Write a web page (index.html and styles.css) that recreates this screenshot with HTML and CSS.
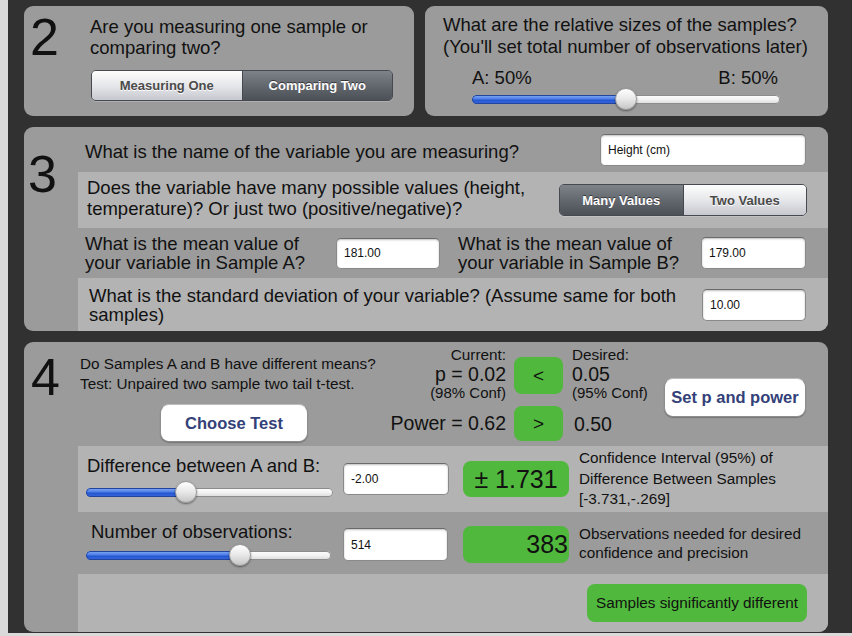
FILE: index.html
```html
<!DOCTYPE html>
<html>
<head>
<meta charset="utf-8">
<title>Sample Size</title>
<link rel="stylesheet" href="styles.css">
</head>
<body>
<div class="screen">
  <div class="top">
    <section class="panel p2">
      <div class="num n2">2</div>
      <div class="p2-body">
        <div class="label">Are you measuring one sample or<br>comparing two?</div>
        <div class="seg seg-a">
          <div class="seg-item light">Measuring One</div>
          <div class="seg-item dark">Comparing Two</div>
        </div>
      </div>
    </section>
    <section class="panel psize">
      <div class="label lsize">What are the relative sizes of the samples?<br>(You'll set total number of observations later)</div>
      <div class="ab"><span>A: 50%</span><span>B: 50%</span></div>
      <div class="slider s-size">
        <div class="track"><div class="fill" style="width:50%"></div></div>
        <div class="thumb" style="left:50%"></div>
      </div>
    </section>
  </div>

  <section class="panel p3">
    <div class="num n3">3</div>
    <div class="rows">
      <div class="row r1">
        <div class="label grow">What is the name of the variable you are measuring?</div>
        <div class="field f-name">Height (cm)</div>
      </div>
      <div class="row r2 lt">
        <div class="label grow">Does the variable have many possible values (height,<br>temperature)? Or just two (positive/negative)?</div>
        <div class="seg seg-b">
          <div class="seg-item dark">Many Values</div>
          <div class="seg-item light">Two Values</div>
        </div>
      </div>
      <div class="row r3">
        <div class="label tight">What is the mean value of<br>your variable in Sample A?</div>
        <div class="field f-a">181.00</div>
        <div class="label tight lb">What is the mean value of<br>your variable in Sample B?</div>
        <div class="field f-b">179.00</div>
      </div>
      <div class="row r4 lt">
        <div class="label tight grow">What is the standard deviation of your variable? (Assume same for both<br>samples)</div>
        <div class="field f-sd">10.00</div>
      </div>
    </div>
  </section>

  <section class="panel p4">
    <div class="num n4">4</div>
    <div class="rows">
      <div class="p4-top">
        <div class="p4-left">
          <div class="small intro">Do Samples A and B have different means?<br>Test: Unpaired two sample two tail t-test.</div>
          <div class="wbtn choose">Choose Test</div>
        </div>
        <div class="col-cur">
          <div class="hdr">Current:</div>
          <div class="big pval">p = 0.02</div>
          <div class="conf">(98% Conf)</div>
          <div class="big pow">Power = 0.62</div>
        </div>
        <div class="col-btn">
          <div class="green gbtn lt-btn">&lt;</div>
          <div class="green gbtn gt-btn">&gt;</div>
        </div>
        <div class="col-des">
          <div class="hdr">Desired:</div>
          <div class="big pval">0.05</div>
          <div class="conf">(95% Conf)</div>
          <div class="big pow pow-des">0.50</div>
        </div>
        <div class="wbtn setp">Set p and power</div>
      </div>

      <div class="row rd lt">
        <div class="ctl">
          <div class="label">Difference between A and B:</div>
          <div class="slider s-diff">
            <div class="track"><div class="fill" style="width:40.5%"></div></div>
            <div class="thumb" style="left:40.5%"></div>
          </div>
        </div>
        <div class="field f-diff">-2.00</div>
        <div class="green out out-ci">± 1.731</div>
        <div class="small note note-ci">Confidence Interval (95%) of<br>Difference Between Samples<br>[-3.731,-.269]</div>
      </div>

      <div class="row rn">
        <div class="ctl">
          <div class="label">Number of observations:</div>
          <div class="slider s-num">
            <div class="track"><div class="fill" style="width:62.9%"></div></div>
            <div class="thumb" style="left:62.9%"></div>
          </div>
        </div>
        <div class="field f-num">514</div>
        <div class="green out out-n">383</div>
        <div class="small note note-n">Observations needed for desired<br>confidence and precision</div>
      </div>

      <div class="row rs lt">
        <div class="green result">Samples significantly different</div>
      </div>
    </div>
  </section>
</div>
</body>
</html>
```

FILE: styles.css
```css
* { box-sizing: border-box; }
html, body { margin: 0; padding: 0; }
body {
  background: #dadada;
  font-family: "Liberation Sans", Arial, Helvetica, sans-serif;
  color: #111;
}
.screen {
  margin-left: 8px;
  width: 844px;
  height: 633px;
  background: #313131;
  padding: 6px 24px 0 16px;
  overflow: hidden;
}
.top { display: flex; gap: 11px; height: 110px; margin-bottom: 11px; }
.panel { background: #9b9b9b; border-radius: 9px; overflow: hidden; }
.p2 { width: 390px; display: flex; }
.psize { width: 403px; padding: 8px 10px 0 18px; }
.p3 { height: 204px; display: flex; margin-bottom: 11px; }
.p4 { height: 290px; display: flex; }

.num { font-size: 52px; line-height: 52px; flex: none; width: 54px; }
.n2 { width: 66px; padding-left: 6px; margin-top: 5px; }
.n3 { padding-left: 4px; margin-top: 21px; }
.n4 { padding-left: 7px; margin-top: 9px; }

.rows { flex: 1; display: flex; flex-direction: column; }
.label { font-size: 18.5px; line-height: 21px; }
.label.tight { line-height: 19px; }
.grow { flex: 1; }
.small { font-size: 15.3px; line-height: 20px; }

/* panel 2 */
.p2-body { padding-top: 10px; }
.seg {
  display: flex;
  border: 1px solid #464950;
  border-radius: 5px;
  overflow: hidden;
  box-shadow: 0 1px 0 rgba(255,255,255,0.2);
}
.seg-item {
  flex: 1;
  display: flex;
  align-items: center;
  justify-content: center;
  font-weight: bold;
  font-size: 13px;
}
.seg-item + .seg-item { border-left: 1px solid #45484e; }
.seg-item.light {
  background: linear-gradient(#fdfdfd, #e6e7ea 50%, #c6c8cf);
  color: #4a4a4a;
  text-shadow: 0 1px 0 #fff;
}
.seg-item.dark {
  background: linear-gradient(#7e8289, #63676e 50%, #4c5057);
  color: #fff;
  text-shadow: 0 -1px 0 rgba(0,0,0,0.5);
}
.seg-a { width: 302px; height: 31px; margin: 12px 0 0 1px; }

/* relative sizes panel */
.lsize { line-height: 21.5px; }
.ab {
  display: flex;
  justify-content: space-between;
  width: 306px;
  margin: 10px 0 0 29px;
  font-size: 18.5px;
  line-height: 21px;
}
.s-size { width: 308px; margin-left: 29px; }

/* slider */
.slider { position: relative; height: 22px; padding-top: 6.5px; }
.track {
  height: 9px;
  border-radius: 5px;
  overflow: hidden;
  background: linear-gradient(#ffffff, #f2f2f2 50%, #dadada);
  box-shadow: inset 0 0 0 1px #8c8c8c;
}
.fill {
  height: 100%;
  background: linear-gradient(#86abf6, #4c7de6 45%, #2456cf 55%, #3868de);
  box-shadow: inset 0 0 0 1px #23449c;
  border-radius: 5px 0 0 5px;
}
.thumb {
  position: absolute;
  top: 0;
  width: 22px;
  height: 22px;
  margin-left: -11px;
  border-radius: 50%;
  background: linear-gradient(#ffffff, #e8e8e8 50%, #c6c6c6);
  border: 1px solid #9a9a9a;
  box-shadow: 0 1px 2px rgba(0,0,0,0.45);
}

/* fields */
.field {
  background: #fff;
  border: 1px solid #8a8a8a;
  border-top-color: #6a6a6a;
  border-radius: 5px;
  box-shadow: inset 0 1px 2px rgba(0,0,0,0.25);
  font-size: 12px;
  padding-left: 7px;
  display: flex;
  align-items: center;
}

/* panel 3 rows */
.row { display: flex; align-items: center; }
.lt { background: #b3b3b3; }
.r1 { height: 45px; padding: 0 22px 0 7px; }
.r1 .label { padding-top: 4px; }
.f-name { width: 206px; height: 32px; }
.r2 { height: 56px; padding: 0 21px 0 9px; }
.r2 .label { padding-bottom: 4px; }
.seg-b { width: 248px; height: 32px; }
.r3 {
  height: 50px;
  display: grid;
  grid-template-columns: 251px 104px 261px 105px;
  align-items: center;
  padding: 0 22px 0 7px;
}
.lb { padding-left: 18px; }
.f-a { height: 31px; }
.f-b { height: 32px; }
.r4 { height: 53px; padding: 0 22px 0 11px; }
.f-sd { width: 104px; height: 32px; }

/* panel 4 top */
.p4-top { display: flex; height: 104px; }
.p4-left { width: 308px; padding-top: 12px; }
.intro { padding-left: 2px; }
.wbtn {
  background: #fff;
  border-radius: 9px;
  border: 1px solid #8e8e8e;
  border-top-color: #bdbdbd;
  box-shadow: 0 1px 1px rgba(0,0,0,0.25);
  color: #334178;
  font-weight: bold;
  font-size: 16.5px;
  display: flex;
  align-items: center;
  justify-content: center;
}
.choose { width: 148px; height: 38px; margin: 10px 0 0 82px; }
.col-cur { width: 120px; padding-top: 6px; text-align: right; }
.col-des { margin-left: 9px; padding-top: 6px; }
.hdr { font-size: 15.3px; line-height: 14px; }
.big { font-size: 19.5px; line-height: 20px; }
.pval { margin-top: 2px; }
.conf { font-size: 15px; line-height: 16px; margin-top: 1px; }
.pow { margin-top: 11.5px; }
.pow-des { margin-top: 13px; padding-left: 2px; }
.col-btn { width: 49px; margin-left: 8px; padding-top: 15px; }
.green { background: #50b83c; border-radius: 8px; }
.gbtn { display: flex; align-items: center; justify-content: center; font-size: 19px; }
.lt-btn { height: 37px; }
.gt-btn { height: 35px; margin-top: 12px; }
.setp { width: 142px; height: 39px; margin: 36px 22px 0 auto; }

/* panel 4 rows */
.ctl { width: 265px; align-self: stretch; }
.rd { height: 66px; }
.rd .label { padding: 9px 0 0 9px; }
.s-diff { width: 247px; margin: 5px 0 0 8px; }
.f-diff { width: 106px; height: 32px; }
.out {
  width: 106px;
  margin-left: 14px;
  font-size: 25px;
  display: flex;
  align-items: center;
}
.out-ci { height: 36px; justify-content: center; }
.note { margin-left: 10px; }
.note-ci { line-height: 20.5px; }

.rn { height: 62px; }
.rn .label { padding: 9px 0 0 13px; }
.s-num { width: 245px; margin: 2px 0 0 8px; }
.f-num { width: 105px; height: 33px; margin-top: 3px; }
.out-n { height: 37px; margin-left: 15px; margin-top: 3px; justify-content: flex-end; padding-right: 1px; }
.note-n { line-height: 19px; }

.rs { height: 58px; justify-content: flex-end; padding-right: 21px; }
.result {
  width: 220px;
  height: 38px;
  font-size: 15.3px;
  display: flex;
  align-items: center;
  justify-content: center;
}
```
